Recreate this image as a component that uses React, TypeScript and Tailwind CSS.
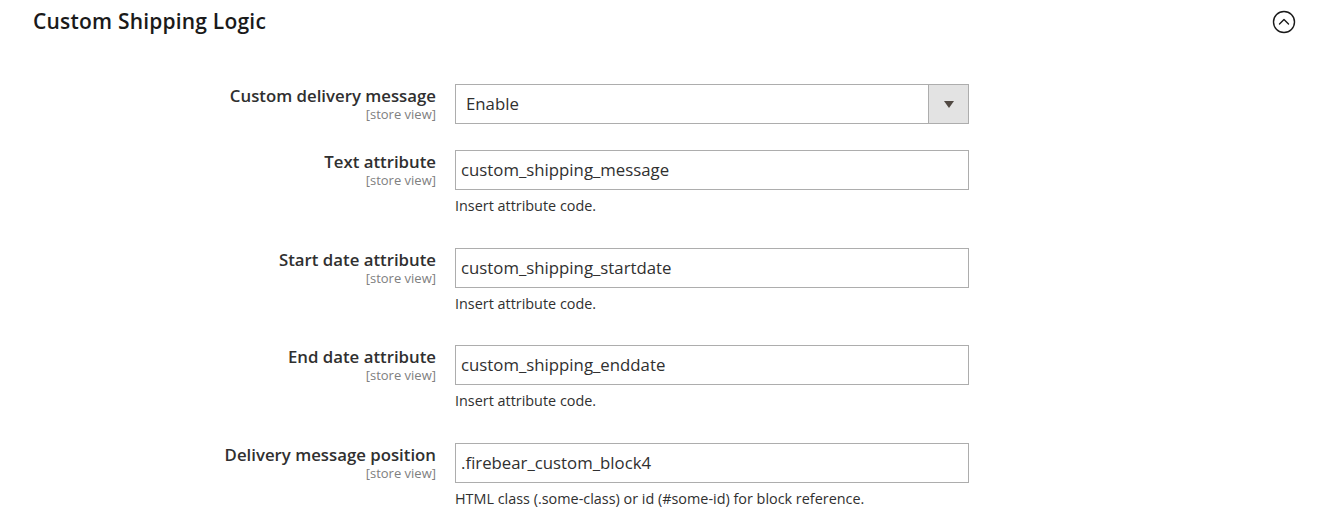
import React from "react";

type Field = {
  label: string;
  value: string;
  note?: string;
  select?: boolean;
};

const fields: Field[] = [
  { label: "Custom delivery message", value: "Enable", select: true },
  { label: "Text attribute", value: "custom_shipping_message", note: "Insert attribute code." },
  { label: "Start date attribute", value: "custom_shipping_startdate", note: "Insert attribute code." },
  { label: "End date attribute", value: "custom_shipping_enddate", note: "Insert attribute code." },
  {
    label: "Delivery message position",
    value: ".firebear_custom_block4",
    note: "HTML class (.some-class) or id (#some-id) for block reference.",
  },
];

function CollapseIcon() {
  return (
    <svg width="24" height="24" viewBox="0 0 24 24" fill="none">
      <circle cx="12" cy="12" r="10.5" stroke="#1a1a1a" strokeWidth="1.4" />
      <path d="M7.5 14 L12 9.5 L16.5 14" stroke="#1a1a1a" strokeWidth="1.4" strokeLinecap="round" strokeLinejoin="round" />
    </svg>
  );
}

function Row({ f }: { f: Field }) {
  return (
    <div className={`flex ${f.select ? "mb-[26px]" : "mb-[31.5px]"}`}>
      <div className="w-[436px] shrink-0 text-right pt-[2px]">
        <div className="text-[16.8px] font-semibold leading-[20px] text-[#303030]">{f.label}</div>
        <div className="text-[13px] leading-[16px] text-[#808080]">[store view]</div>
      </div>
      <div className="ml-[19px] w-[514px]">
        {f.select ? (
          <div className="flex h-[40px] border border-[#adadad] bg-white">
            <div className="flex-1 pl-[10px] flex items-center text-[16.8px] text-[#303030]">{f.value}</div>
            <div className="w-[40px] border-l border-[#adadad] bg-[#e3e3e3] flex items-center justify-center">
              <svg width="10" height="7" viewBox="0 0 10 7">
                <path d="M0 0 L10 0 L5 7 Z" fill="#514943" />
              </svg>
            </div>
          </div>
        ) : (
          <div className="h-[40px] border border-[#adadad] bg-white pl-[5px] flex items-center text-[16.8px] text-[#303030]">
            {f.value}
          </div>
        )}
        {f.note && (
          <div className="mt-[6px] text-[14.4px] leading-[20px] text-[#303030]">{f.note}</div>
        )}
      </div>
    </div>
  );
}

export default function App() {
  return (
    <div className="w-[1321px] h-[527px] bg-white overflow-hidden" style={{ fontFamily: '"Open Sans", sans-serif' }}>
      <div className="flex items-center justify-between pl-[33px] pr-[25px] h-[44px]">
        <h2 className="text-[21px] font-semibold tracking-[0.2px] text-[#1a1a1a]">Custom Shipping Logic</h2>
        <CollapseIcon />
      </div>
      <div className="pt-[40px]">
        {fields.map((f) => (
          <Row key={f.label} f={f} />
        ))}
      </div>
    </div>
  );
}
